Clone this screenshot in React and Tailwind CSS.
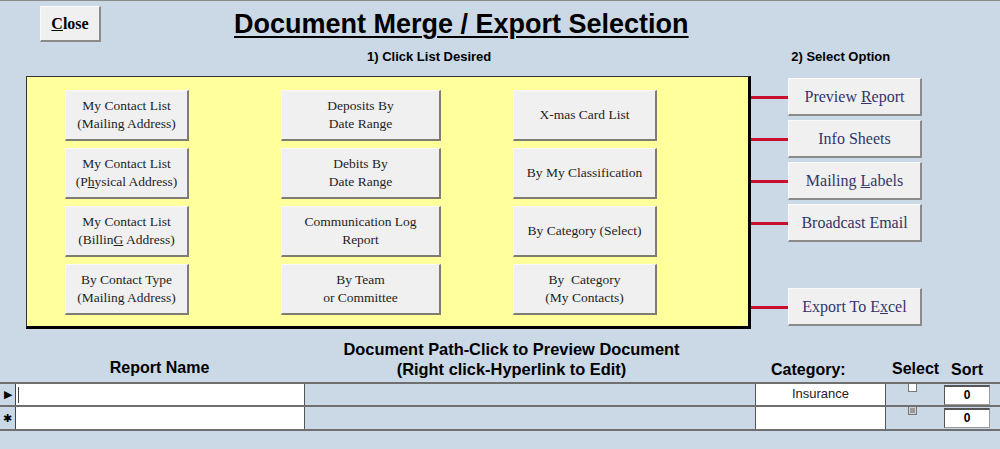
import React from "react";

const sans = { fontFamily: '"Liberation Sans", Arial, sans-serif' };
const serif = { fontFamily: '"Liberation Serif", "Times New Roman", serif' };

const listColumns = [
  {
    width: "w-[124px]",
    left: "ml-[38px]",
    items: [
      ["My Contact List", <>(Mailing Address)</>],
      ["My Contact List", <>(P<span className="underline">h</span>ysical Address)</>],
      ["My Contact List", <>(Billin<span className="underline">G</span> Address)</>],
      ["By Contact Type", <>(Mailing Address)</>],
    ],
  },
  {
    width: "w-[160px]",
    left: "ml-[92px]",
    items: [
      ["Deposits By", "Date Range"],
      ["Debits By", "Date Range"],
      ["Communication Log", "Report"],
      ["By Team", "or Committee"],
    ],
  },
  {
    width: "w-[144px]",
    left: "ml-[72px]",
    items: [
      ["X-mas Card List"],
      ["By My Classification"],
      ["By Category (Select)"],
      ["By  Category", "(My Contacts)"],
    ],
  },
];

const options = [
  { label: <>Preview <span className="underline">R</span>eport</>, gap: "mt-[2px]" },
  { label: "Info Sheets", gap: "mt-[4px]" },
  { label: <>Mailing <span className="underline">L</span>abels</>, gap: "mt-[4px]" },
  { label: "Broadcast Email", gap: "mt-[4px]" },
  { label: <>Export To E<span className="underline">x</span>cel</>, gap: "mt-[46px]" },
];

function ListButton({ lines, width }) {
  return (
    <button
      className={`${width} h-[51px] flex flex-col items-center justify-center bg-[#f0f0f0] border-t border-l border-t-[#fafafa] border-l-[#fafafa] border-b-2 border-r-2 border-b-[#7d7d70] border-r-[#7d7d70] text-[13.5px] leading-[18px] text-[#1e1e1e] whitespace-pre`}
      style={serif}
    >
      {lines.map((l, i) => (
        <span key={i}>{l}</span>
      ))}
    </button>
  );
}

function OptionRow({ label, gap }) {
  return (
    <div className={`flex items-center ${gap}`}>
      <div className="w-[37px] h-[3px] bg-[#c8102e]" />
      <button
        className="w-[134px] h-[38px] bg-[#f0f0f0] border-t border-l border-t-[#fafafa] border-l-[#fafafa] border-b-2 border-r-2 border-b-[#8a8a8a] border-r-[#8a8a8a] text-[16px] text-[#34346c]"
        style={serif}
      >
        {label}
      </button>
    </div>
  );
}

function GridRow({ marker, category, checked, h }) {
  return (
    <div className={`flex ${h} border-b-2 border-[#6f6f6f]`}>
      <div className="w-[15px] flex items-center justify-center text-[11px] leading-none text-black">
        {marker}
      </div>
      <div className="w-[289px] bg-white border-l border-[#444]">
        {marker === "▶" && <div className="ml-[2px] mt-[3px] w-px h-[16px] bg-[#444]" />}
      </div>
      <div className="w-[451px] border-l border-[#555]" />
      <div
        className="w-[130px] bg-white border-l border-[#555] text-center text-[13px] leading-[20px] text-[#222]"
        style={sans}
      >
        {category}
      </div>
      <div className="w-[58px] border-l border-[#555] flex justify-center">
        <div
          className={`w-[9px] h-[8px] ml-[-4px] border border-[#777] border-t-0 ${
            checked ? "bg-[#9a9a9a] shadow-[inset_0_0_0_1px_#d0d0d0]" : "bg-white"
          }`}
        />
      </div>
      <div className="w-[57px] pt-[1px] pl-[1px]">
        <div
          className="w-[46px] h-[20px] bg-white border-t-2 border-l border-[#555] border-b border-r border-b-[#999] border-r-[#999] text-center text-[12px] font-bold leading-[17px] text-black"
          style={sans}
        >
          0
        </div>
      </div>
    </div>
  );
}

export default function App() {
  return (
    <div className="w-[1000px] h-[449px] bg-[#cbd8e6] border-t border-[#8c8c8c] overflow-hidden" style={sans}>
      {/* header */}
      <div className="flex items-start h-[46px] pt-[5px]">
        <button
          className="ml-[40px] w-[61px] h-[36px] bg-[#f0f0f0] border-t border-l border-t-[#fafafa] border-l-[#fafafa] border-b-2 border-r-2 border-b-[#8a8a8a] border-r-[#8a8a8a] text-[16px] font-bold text-black"
          style={serif}
        >
          <span className="underline">C</span>lose
        </button>
        <h1 className="ml-[133px] mt-[3px] text-[27px] leading-[31px] font-bold underline decoration-2 underline-offset-[3px] text-black">
          Document Merge / Export Selection
        </h1>
      </div>

      <div className="flex h-[29px] text-[13px] font-bold text-black">
        <span className="ml-[367px]">1) Click List Desired</span>
        <span className="ml-[300px]">2) Select Option</span>
      </div>

      {/* panel + options */}
      <div className="flex items-start">
        <div className="ml-[26px] w-[725px] h-[253px] bg-[#ffff9c] border-t border-l border-[#333] border-r-[3px] border-b-[3px] border-r-black border-b-black">
          <div className="flex pt-[13px]">
            {listColumns.map((col, ci) => (
              <div key={ci} className={`flex flex-col gap-[7px] ${col.left}`}>
                {col.items.map((lines, i) => (
                  <ListButton key={i} lines={lines} width={col.width} />
                ))}
              </div>
            ))}
          </div>
        </div>
        <div className="flex flex-col">
          {options.map((o, i) => (
            <OptionRow key={i} label={o.label} gap={o.gap} />
          ))}
        </div>
      </div>

      {/* grid headers */}
      <div className="flex items-end h-[53px] pb-[4px] font-bold text-[16px] text-black">
        <div className="w-[304px] pl-[15px] text-center leading-[20px]">Report Name</div>
        <div className="w-[451px] text-center leading-[20px] pr-[36px] mb-[-1px] text-[16.4px]">
          <div>Document Path-Click to Preview Document</div>
          <div>(Right click-Hyperlink to Edit)</div>
        </div>
        <div className="w-[130px] pl-[16px] leading-[20px] mb-[-2px]">Category:</div>
        <div className="w-[58px] pl-[7px] leading-[20px] mb-[-1px]">Select</div>
        <div className="w-[57px] pl-[8px] leading-[20px] mb-[-2px]">Sort</div>
      </div>

      {/* grid */}
      <div className="border-t-2 border-[#6f6f6f]">
        <GridRow marker="▶" category="Insurance" h="h-[23px]" />
        <GridRow marker="✱" category="" checked h="h-[24px]" />
      </div>
    </div>
  );
}
